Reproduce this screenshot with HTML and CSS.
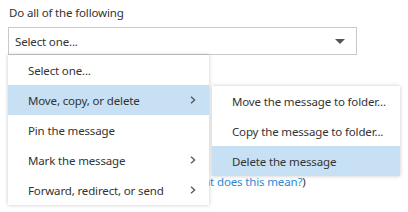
FILE: index.html
```html
<!DOCTYPE html>
<html lang="en">
  <head>
    <meta charset="UTF-8" />
    <title>Rule actions</title>
    <link rel="stylesheet" href="styles.css">
  </head>
  <body>
    <div class="field">
      <div class="field-label">Do all of the following</div>
      <div class="select">
        <span>Select one...</span>
        <span class="caret"></span>
      </div>

      <ul class="menu">
        <li>Select one...</li>
        <li class="selected">Move, copy, or delete
          <svg class="chev" width="6" height="8" viewBox="0 0 6 8"><path d="M1 0.8 L4.6 4 L1 7.2" fill="none" stroke="#555" stroke-width="1.3"/></svg>
        </li>
        <li>Pin the message</li>
        <li>Mark the message
          <svg class="chev" width="6" height="8" viewBox="0 0 6 8"><path d="M1 0.8 L4.6 4 L1 7.2" fill="none" stroke="#555" stroke-width="1.3"/></svg>
        </li>
        <li>Forward, redirect, or send
          <svg class="chev" width="6" height="8" viewBox="0 0 6 8"><path d="M1 0.8 L4.6 4 L1 7.2" fill="none" stroke="#555" stroke-width="1.3"/></svg>
        </li>
      </ul>

      <ul class="menu submenu">
        <li>Move the message to folder...</li>
        <li>Copy the message to folder...</li>
        <li class="selected">Delete the message</li>
      </ul>
    </div>

    <p class="hint">(<a href="#">What does this mean?</a>)</p>
  </body>
</html>
```

FILE: styles.css
```css
html,
body {
  min-height: 212px;
}
body {
  margin: 0;
  padding: 5px 0 0 0;
  box-sizing: border-box;
  font-family: "Noto Sans", "Open Sans", sans-serif;
  font-size: 11.5px;
  letter-spacing: -0.15px;
  color: #333;
  background-color: #fff;
}
.field {
  position: relative;
  z-index: 1;
  padding-left: 8px;
}
.field-label {
  padding-left: 1px;
  line-height: 16px;
  height: 16px;
  margin-bottom: 6px;
}
.select {
  width: 349px;
  height: 28px;
  box-sizing: border-box;
  border: 1px solid #c8c8c8;
  display: flex;
  align-items: center;
  justify-content: space-between;
  padding: 0 7px 0 6px;
}
.caret {
  width: 0;
  height: 0;
  border-left: 5px solid transparent;
  border-right: 5px solid transparent;
  border-top: 5px solid #555;
  margin-right: 4px;
}
.menu {
  position: absolute;
  top: 50px;
  left: 8px;
  width: 201px;
  margin: 0;
  padding: 0;
  list-style: none;
  background-color: #fff;
  box-shadow: 0 0 4px rgba(0, 0, 0, 0.22);
}
.menu li {
  height: 30px;
  display: flex;
  align-items: center;
  justify-content: space-between;
  padding: 0 13px 0 20px;
  white-space: nowrap;
}
.menu li.selected {
  background-color: #c7e0f4;
}
.submenu {
  top: 81px;
  left: 212px;
  width: 188px;
}
.chev {
  display: block;
}
.hint {
  margin: 118px 0 0 0;
  padding-left: 183px;
  line-height: 18px;
}
.hint a {
  color: #2b88d8;
  text-decoration: none;
}
```
